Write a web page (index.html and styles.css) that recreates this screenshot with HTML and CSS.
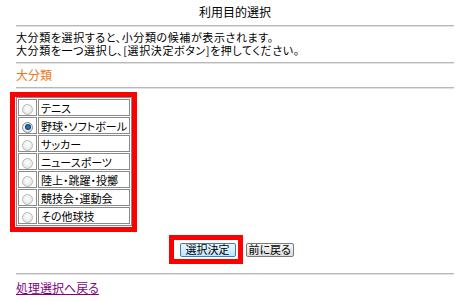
FILE: index.html
```html
<!DOCTYPE html>
<html lang="ja">
<head>
<meta charset="utf-8">
<link rel="stylesheet" href="styles.css">
</head>
<body>
<div class="page">
  <h1 class="title">利用目的選択</h1>
  <div class="rule"></div>
  <p class="desc">大分類を選択すると、小分類の候補が表示されます。<br>大分類を一つ選択し、[選択決定ボタン]を押してください。</p>
  <div class="rule"></div>
  <h2 class="section">大分類</h2>
  <div class="rule"></div>
  <div class="hilite">
    <table class="choices">
      <tr><td class="rc"><span class="radio"></span></td><td class="lc">テニス</td></tr>
      <tr><td class="rc"><span class="radio on"></span></td><td class="lc">野球・ソフトボール</td></tr>
      <tr><td class="rc"><span class="radio"></span></td><td class="lc">サッカー</td></tr>
      <tr><td class="rc"><span class="radio"></span></td><td class="lc">ニュースポーツ</td></tr>
      <tr><td class="rc"><span class="radio"></span></td><td class="lc">陸上・跳躍・投擲</td></tr>
      <tr><td class="rc"><span class="radio"></span></td><td class="lc">競技会・運動会</td></tr>
      <tr><td class="rc"><span class="radio"></span></td><td class="lc">その他球技</td></tr>
    </table>
  </div>
  <div class="actions">
    <div class="btnbox"><button class="btn primary">選択決定</button></div>
    <button class="btn second">前に戻る</button>
  </div>
  <div class="rule"></div>
  <a class="back" href="#">処理選択へ戻る</a>
</div>
</body>
</html>
```
FILE: styles.css
```css
* { box-sizing: border-box; }
body {
  margin: 0;
  background: #fff;
  color: #000;
  font-family: "Noto Sans CJK JP", sans-serif;
  font-feature-settings: "palt";
  font-size: 11px;
}
.page { padding: 0 16px; }
.title {
  margin: 0;
  height: 25px;
  line-height: 24px;
  font-size: 12px;
  font-weight: normal;
  text-align: center;
}
.rule {
  height: 2px;
  border-top: 1px solid #b8b8b8;
  border-bottom: 1px solid #e2e2e2;
}
.desc {
  margin: 0;
  padding: 4px 0 5px;
  font-size: 11px;
  line-height: 13px;
  letter-spacing: 0.6px;
}
.section {
  margin: 0;
  padding: 5px 0 6px;
  font-size: 12px;
  line-height: 12px;
  font-weight: normal;
  color: #e8781c;
}
.hilite {
  display: inline-block;
  margin: 3px 0 0 -6px;
  border: 5px solid #f00;
  padding: 0 0 0 1px;
  height: 140px;
}
.choices {
  border-collapse: separate;
  border-spacing: 1px;
  border: 1px solid #8a8a8a;
  margin: 0;
  table-layout: fixed;
  width: 116px;
}
.choices td {
  border: 1px solid #8a8a8a;
  height: 17px;
  padding: 0;
  font-size: 11px;
  line-height: 14px;
  vertical-align: middle;
}
.rc { width: 19px; text-align: center; }
.lc { width: 92px; padding-left: 2px !important; white-space: nowrap; overflow: hidden; }
.radio {
  display: inline-block;
  width: 11px;
  height: 11px;
  border-radius: 50%;
  border: 1px solid #b9b9b9;
  background: radial-gradient(circle at 50% 40%, #ffffff 0%, #eeeeee 55%, #d4d4d4 100%);
  vertical-align: middle;
  position: relative;
}
.radio.on {
  border-color: #8a8a8a;
}
.radio.on::after {
  content: "";
  position: absolute;
  left: 2.5px;
  top: 2.5px;
  width: 4px;
  height: 4px;
  border-radius: 50%;
  background: #1677c8;
  box-shadow: 0 0 0 1px #0d3e73;
}
.actions {
  display: flex;
  justify-content: center;
  align-items: center;
  gap: 3px;
  height: 29px;
  padding-right: 8px;
  margin-bottom: 9px;
}
.btnbox {
  height: 29px;
  border: 5px solid #f00;
  padding: 3px 2px 3px 6px;
  display: flex;
  align-items: center;
}
.btn {
  display: block;
  font-family: "Noto Sans CJK JP", sans-serif;
  font-feature-settings: "palt";
  font-size: 11px;
  line-height: 11px;
  height: 14px;
  padding: 0 2px;
  border: 1px solid #7a7a7a;
  border-radius: 2px;
  background: linear-gradient(#f6f6f6, #dcdcdc);
  color: #000;
  margin: 0;
  white-space: nowrap;
  text-align: center;
}
.btn.primary {
  width: 56px;
  border-color: #3c7fb1;
  background: linear-gradient(#eaf6fd, #bee6fd);
}
.btn.second { width: 48px; }
.back {
  display: inline-block;
  margin-top: 6px;
  font-size: 12px;
  line-height: 14px;
  color: #800080;
  text-decoration: underline;
}
```
